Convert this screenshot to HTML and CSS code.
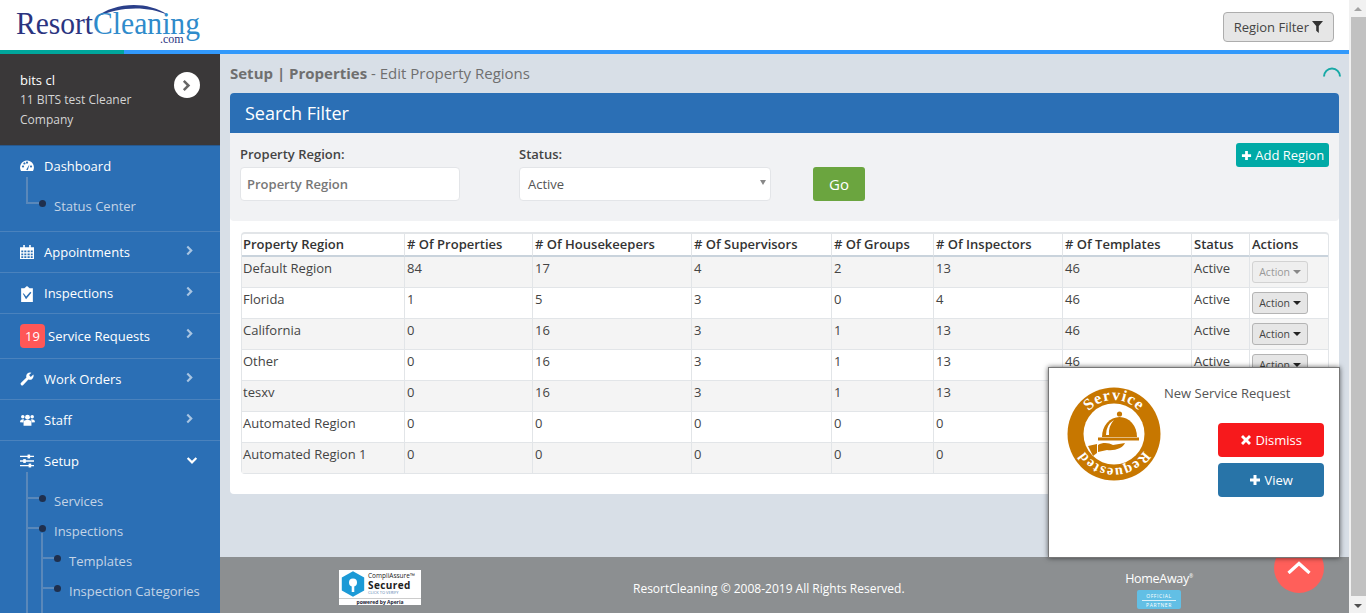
FILE: index.html
```html
<!DOCTYPE html>
<html lang="en">
<head>
    <meta charset="UTF-8">
    <meta name="viewport" content="width=device-width, initial-scale=1.0">
    <title>Edit Property Regions</title>
    <link rel="stylesheet" href="styles.css">
</head>
<body>
    <svg class="icon-defs" width="0" height="0" aria-hidden="true">
        <symbol id="i-right" viewBox="0 0 10 14"><path d="M2.5 1 L8.5 7 L2.5 13 L0.6 11 L4.6 7 L0.6 3 Z"/></symbol>
        <symbol id="i-down" viewBox="0 0 14 10"><path d="M1 3 L2.8 1.2 L7 5.2 L11.2 1.2 L13 3 L7 9 Z"/></symbol>
        <symbol id="i-plus" viewBox="0 0 12 12"><path d="M4.5 1 H7.5 V4.5 H11 V7.5 H7.5 V11 H4.5 V7.5 H1 V4.5 H4.5 Z"/></symbol>
        <symbol id="i-times" viewBox="0 0 12 12"><path d="M3 1 L6 4 L9 1 L11 3 L8 6 L11 9 L9 11 L6 8 L3 11 L1 9 L4 6 L1 3 Z"/></symbol>
    </svg>

    <div class="page">
        <div class="app">
            <header class="topbar">
                <svg class="logo" width="186" height="50" viewBox="0 0 186 50">
                    <path d="M80 17 C98 3 130 0 152 15 C130 5 102 7 80 17 Z" fill="#2a3f8a"/>
                    <text x="0" y="34" class="logo-dark" textLength="77" lengthAdjust="spacingAndGlyphs">Resort</text>
                    <text x="77" y="34" class="logo-light" textLength="107" lengthAdjust="spacingAndGlyphs">Cleaning</text>
                    <text x="144" y="43" class="logo-com">.com</text>
                </svg>
                <button class="region-btn">Region Filter
                    <svg width="11" height="12" viewBox="0 0 11 12"><path d="M0 0 H11 L6.8 5 V12 L4.2 9.8 V5 Z"/></svg>
                </button>
            </header>
            <div class="accent-line"></div>

            <div class="layout">
                <aside class="sidebar">
                    <div class="user-box">
                        <div class="user-text">
                            <div class="user-name">bits cl</div>
                            <div class="user-company">11 BITS test Cleaner Company</div>
                        </div>
                        <span class="user-toggle"><svg width="10" height="13"><use href="#i-right"/></svg></span>
                    </div>

                    <div class="nav-item nav-dash">
                        <div class="nav-row">
                            <svg class="nav-icon" viewBox="0 0 14 12"><path d="M7 0.5 A7 7 0 0 0 1 11 H13 A7 7 0 0 0 7 0.5 Z M3 7.5 a1 1 0 1 1 0.01 0 Z M4.4 4.4 a1 1 0 1 1 0.01 0 Z M7 3.6 a1 1 0 1 1 0.01 0 Z M11 7.5 a1 1 0 1 1 0.01 0 Z M6.3 9.5 L9.5 4.2 L8 9.5 A1 1 0 0 1 6.3 9.5 Z" fill-rule="evenodd"/></svg>
                            <span>Dashboard</span>
                        </div>
                        <ul class="sub-list">
                            <li>Status Center</li>
                        </ul>
                    </div>
                    <div class="nav-item">
                        <div class="nav-row">
                            <svg class="nav-icon" viewBox="0 0 13 13"><path d="M3 0 H4.5 V2 H8.5 V0 H10 V2 H13 V13 H0 V2 H3 Z M1.2 5 V6.8 H3 V5 Z M4 5 V6.8 H5.9 V5 Z M7 5 V6.8 H9 V5 Z M10 5 V6.8 H11.8 V5 Z M1.2 7.8 V9.5 H3 V7.8 Z M4 7.8 V9.5 H5.9 V7.8 Z M7 7.8 V9.5 H9 V7.8 Z M10 7.8 V9.5 H11.8 V7.8 Z M1.2 10.4 V12 H3 V10.4 Z M4 10.4 V12 H5.9 V10.4 Z M7 10.4 V12 H9 V10.4 Z M10 10.4 V12 H11.8 V10.4 Z" fill-rule="evenodd"/></svg>
                            <span>Appointments</span>
                            <svg class="nav-arrow" width="8" height="11"><use href="#i-right"/></svg>
                        </div>
                    </div>
                    <div class="nav-item">
                        <div class="nav-row">
                            <svg class="nav-icon nav-icon-tall" viewBox="0 0 13 15"><path d="M4 2 L6.5 0 L9 2 H12 V15 H1 V2 Z M3 6.8 L2.6 7.2 L5.6 12.4 L10.6 6.4 L9.6 5.4 L5.7 9.8 L3.9 7.4 Z" fill-rule="evenodd"/></svg>
                            <span>Inspections</span>
                            <svg class="nav-arrow" width="8" height="11"><use href="#i-right"/></svg>
                        </div>
                    </div>
                    <div class="nav-item nav-tall">
                        <div class="nav-row">
                            <span class="nav-badge">19</span>
                            <span>Service Requests</span>
                            <svg class="nav-arrow" width="8" height="11"><use href="#i-right"/></svg>
                        </div>
                    </div>
                    <div class="nav-item">
                        <div class="nav-row">
                            <svg class="nav-icon" viewBox="0 0 13 13"><path d="M1 10 L6 5.2 A3.6 3.6 0 0 1 10.6 0.6 L8.4 2.8 L10 4.6 L12.4 2.4 A3.6 3.6 0 0 1 7.8 7 L3 12 A1.4 1.4 0 0 1 1 10 Z"/></svg>
                            <span>Work Orders</span>
                            <svg class="nav-arrow" width="8" height="11"><use href="#i-right"/></svg>
                        </div>
                    </div>
                    <div class="nav-item">
                        <div class="nav-row">
                            <svg class="nav-icon nav-icon-wide" viewBox="0 0 16 12"><circle cx="3" cy="2.5" r="1.9"/><circle cx="13" cy="2.5" r="1.9"/><circle cx="8" cy="3" r="2.6"/><path d="M0 8.5 C0 5.6 2.5 5 4.2 5.4 L3.4 8.6 Z M16 8.5 C16 5.6 13.5 5 11.8 5.4 L12.6 8.6 Z M3.8 12 V8.8 C3.8 6 6 6 8 6 C10 6 12.2 6 12.2 8.8 V12 Z"/></svg>
                            <span>Staff</span>
                            <svg class="nav-arrow" width="8" height="11"><use href="#i-right"/></svg>
                        </div>
                    </div>
                    <div class="nav-item nav-open">
                        <div class="nav-row">
                            <svg class="nav-icon" viewBox="0 0 13 12"><path d="M0 1.2 H13 V2.4 H0 Z M0 5.4 H13 V6.6 H0 Z M0 9.6 H13 V10.8 H0 Z"/><rect x="7" y="0" width="2.4" height="3.6"/><rect x="3" y="4.2" width="2.4" height="3.6"/><rect x="8" y="8.4" width="2.4" height="3.6"/></svg>
                            <span>Setup</span>
                            <svg class="nav-arrow nav-arrow-open" width="12" height="9"><use href="#i-down"/></svg>
                        </div>
                        <ul class="sub-list">
                            <li>Services</li>
                            <li>Inspections
                                <ul class="sub-list sub-nested">
                                    <li>Templates</li>
                                    <li>Inspection Categories</li>
                                </ul>
                            </li>
                        </ul>
                    </div>
                </aside>

                <div class="main">
                    <div class="content">
                        <div class="crumb-row">
                            <div class="crumbs"><b>Setup | Properties</b> - Edit Property Regions</div>
                            <svg class="spinner" width="18" height="10" viewBox="0 0 18 10"><path d="M1 9.5 A8 8 0 0 1 17 9.5" fill="none" stroke="#17a9a6" stroke-width="2"/></svg>
                        </div>

                        <section class="panel">
                            <h2 class="panel-head">Search Filter</h2>
                            <div class="filter">
                                <div class="field field-region">
                                    <label>Property Region:</label>
                                    <input type="text" placeholder="Property Region">
                                </div>
                                <div class="field field-status">
                                    <label>Status:</label>
                                    <div class="fake-select">Active<span class="select-caret"></span></div>
                                </div>
                                <button class="go-btn">Go</button>
                                <button class="add-btn"><svg width="11" height="11"><use href="#i-plus"/></svg> Add Region</button>
                            </div>
                            <div class="table-wrap">
                                <table class="regions">
                                    <colgroup>
                                        <col class="c1"><col class="c2"><col class="c3"><col class="c4"><col class="c5"><col class="c6"><col class="c7"><col class="c8"><col class="c9">
                                    </colgroup>
                                    <thead>
                                        <tr><th>Property Region</th><th># Of Properties</th><th># Of Housekeepers</th><th># Of Supervisors</th><th># Of Groups</th><th># Of Inspectors</th><th># Of Templates</th><th>Status</th><th>Actions</th></tr>
                                    </thead>
                                    <tbody>
                                        <tr><td>Default Region</td><td>84</td><td>17</td><td>4</td><td>2</td><td>13</td><td>46</td><td>Active</td><td><button class="action-btn is-disabled">Action <i class="caret"></i></button></td></tr>
                                        <tr><td>Florida</td><td>1</td><td>5</td><td>3</td><td>0</td><td>4</td><td>46</td><td>Active</td><td><button class="action-btn">Action <i class="caret"></i></button></td></tr>
                                        <tr><td>California</td><td>0</td><td>16</td><td>3</td><td>1</td><td>13</td><td>46</td><td>Active</td><td><button class="action-btn">Action <i class="caret"></i></button></td></tr>
                                        <tr><td>Other</td><td>0</td><td>16</td><td>3</td><td>1</td><td>13</td><td>46</td><td>Active</td><td><button class="action-btn">Action <i class="caret"></i></button></td></tr>
                                        <tr><td>tesxv</td><td>0</td><td>16</td><td>3</td><td>1</td><td>13</td><td>46</td><td>Active</td><td><button class="action-btn">Action <i class="caret"></i></button></td></tr>
                                        <tr><td>Automated Region</td><td>0</td><td>0</td><td>0</td><td>0</td><td>0</td><td>46</td><td>Active</td><td><button class="action-btn">Action <i class="caret"></i></button></td></tr>
                                        <tr><td>Automated Region 1</td><td>0</td><td>0</td><td>0</td><td>0</td><td>0</td><td>46</td><td>Active</td><td><button class="action-btn">Action <i class="caret"></i></button></td></tr>
                                    </tbody>
                                </table>
                            </div>
                        </section>
                    </div>

                    <footer class="footer">
                        <div class="badge-secured">
                            <div class="secured-top">
                                <svg width="30" height="32" viewBox="0 0 30 32"><path d="M15 0 L29 8 V24 L15 32 L1 24 V8 Z" fill="#1c9ad6"/><circle cx="15" cy="14" r="5" fill="#fff"/><rect x="13.4" y="16" width="3.2" height="10" fill="#fff"/></svg>
                                <div class="secured-text">
                                    <span class="secured-a">CompliAssure&#8482;</span>
                                    <span class="secured-b">Secured</span>
                                    <span class="secured-c">CLICK TO VERIFY</span>
                                </div>
                            </div>
                            <div class="secured-foot">powered by Aperia</div>
                        </div>
                        <div class="copyright">ResortCleaning &copy; 2008-2019 All Rights Reserved.</div>
                        <div class="partner">
                            <div class="partner-name">HomeAway<sup>&reg;</sup></div>
                            <div class="partner-tag"><span>OFFICIAL</span><span>PARTNER</span></div>
                        </div>
                    </footer>
                </div>
            </div>
        </div>

        <div class="scrollbar">
            <span class="arrow-up"></span>
            <span class="thumb"></span>
            <span class="arrow-down"></span>
        </div>
    </div>

    <button class="to-top"><svg width="24" height="13" viewBox="0 0 24 13"><path d="M1.5 12 L12 2.5 L22.5 12" fill="none" stroke="#fff" stroke-width="3.2"/></svg></button>

    <div class="toast">
        <svg class="toast-logo" width="94" height="94" viewBox="0 0 94 94">
            <defs>
                <path id="arc-seal" d="M13 47 A34 34 0 0 1 81 47"/>
            </defs>
            <circle cx="47" cy="47" r="46.5" fill="#c77700"/>
            <circle cx="47" cy="47" r="30.5" fill="#fff"/>
            <text class="seal-text"><textPath href="#arc-seal" startOffset="50%" text-anchor="middle">Service</textPath></text>
            <g transform="rotate(180 47 47)">
                <text class="seal-text seal-small"><textPath href="#arc-seal" startOffset="50%" text-anchor="middle">Requested</textPath></text>
            </g>
            <circle cx="52.5" cy="27" r="2.6" fill="#c77700"/>
            <path d="M35 50 A17.5 20 0 0 1 70 50 Z" fill="#c77700"/>
            <path d="M39 48 A14 17 0 0 1 47 33 A19 19 0 0 0 42 48 Z" fill="#fff"/>
            <rect x="31" y="50.5" width="41" height="3" fill="#c77700"/>
            <path d="M31 58 C36 55 42 56 46 58 L58 56 C56 61 48 64 40 63 L31 65 Z" fill="#c77700"/>
            <path d="M21 59 L30 57 L30 66 L26 69 Z" fill="#c77700"/>
        </svg>
        <div class="toast-body">
            <div class="toast-title">New Service Request</div>
            <div class="toast-actions">
                <button class="toast-btn btn-dismiss"><svg width="12" height="12"><use href="#i-times"/></svg> Dismiss</button>
                <button class="toast-btn btn-view"><svg width="12" height="12"><use href="#i-plus"/></svg> View</button>
            </div>
        </div>
    </div>
</body>
</html>
```

FILE: styles.css
```css
* {
    box-sizing: border-box;
}

html, body {
    height: 100%;
    margin: 0;
    overflow: hidden;
}

body {
    font-family: 'Open Sans', sans-serif;
    font-size: 13px;
    color: #3a3a3a;
    background: #d8dfe7;
}

.icon-defs {
    display: block;
    height: 0;
}

.page {
    display: flex;
    height: 613px;
}

.app {
    flex: 1;
    min-width: 0;
    display: flex;
    flex-direction: column;
}

/* top bar */
.topbar {
    height: 50px;
    background: #fff;
    display: flex;
    align-items: center;
    justify-content: space-between;
    padding: 0 15px 0 16px;
    flex-shrink: 0;
}

.logo {
    display: block;
}

.logo-dark {
    font-family: 'Liberation Serif', serif;
    font-size: 32px;
    fill: #2a3480;
}

.logo-light {
    font-family: 'Liberation Serif', serif;
    font-size: 32px;
    fill: #2f8bcb;
}

.logo-com {
    font-family: 'Liberation Serif', serif;
    font-size: 12px;
    fill: #2a3480;
}

.region-btn {
    height: 30px;
    width: 111px;
    padding: 0;
    font: 13px 'Open Sans', sans-serif;
    color: #444;
    background: #e6e6e6;
    border: 1px solid #adadad;
    border-radius: 4px;
    margin-top: 4px;
}

.region-btn svg {
    fill: #333;
    vertical-align: -1px;
}

.accent-line {
    height: 4px;
    flex-shrink: 0;
    background: linear-gradient(to right, #00a69c 124px, #3299fb 124px);
}

.layout {
    flex: 1;
    min-height: 0;
    display: flex;
}

/* sidebar */
.sidebar {
    width: 220px;
    flex-shrink: 0;
    background: #2b6fb5;
    overflow: hidden;
}

.user-box {
    height: 92px;
    background: #3a3839;
    color: #d5d5d5;
    padding: 16px 20px 0;
    display: flex;
    justify-content: space-between;
    align-items: flex-start;
    border-bottom: 1px solid #27598f;
}

.user-text {
    width: 130px;
    font-size: 12px;
    line-height: 20px;
}

.user-name {
    font-size: 13px;
    color: #fff;
}

.user-toggle {
    width: 26px;
    height: 26px;
    margin-top: 2px;
    border-radius: 50%;
    background: #fff;
    display: flex;
    align-items: center;
    justify-content: center;
}

.user-toggle svg {
    fill: #666;
}

.nav-item {
    border-bottom: 1px solid #4a82bd;
    min-height: 41px;
    color: #fff;
}

.nav-dash {
    height: 86px;
}

.nav-tall {
    height: 45px;
}

.nav-row {
    height: 40px;
    display: flex;
    align-items: center;
    padding-left: 20px;
    position: relative;
}

.nav-tall .nav-row {
    height: 44px;
}

.nav-icon {
    width: 14px;
    height: 14px;
    fill: #fff;
    margin-right: 10px;
    flex-shrink: 0;
}

.nav-icon-wide {
    width: 15px;
    margin-right: 9px;
}

.nav-icon-tall {
    height: 16px;
    margin-top: 2px;
}

.nav-badge {
    width: 25px;
    height: 24px;
    margin-right: 3px;
    border-radius: 4px;
    background: #ff5757;
    font-size: 13px;
    display: flex;
    align-items: center;
    justify-content: center;
}

.nav-arrow {
    position: absolute;
    right: 26px;
    top: 13px;
    fill: #a9c5e2;
}

.nav-tall .nav-arrow {
    top: 14px;
}

.nav-arrow-open {
    right: 22px;
    top: 15px;
    fill: #fff;
}

/* tree lists in the sidebar */
.sub-list {
    list-style: none;
    margin: 0;
    padding: 0 0 0 27px;
    color: #c4d4e6;
    position: relative;
}

.sub-list::before {
    content: "";
    position: absolute;
    left: 26px;
    top: -14px;
    bottom: 13px;
    width: 2px;
    background: #5a88ba;
}

.sub-list li {
    position: relative;
    padding-left: 27px;
    line-height: 30px;
}

.sub-list li::before {
    content: "";
    position: absolute;
    left: 0;
    top: 11px;
    width: 12px;
    height: 2px;
    background: #5a88ba;
}

.sub-list li::after {
    content: "";
    position: absolute;
    left: 12px;
    top: 9px;
    width: 7px;
    height: 7px;
    border-radius: 50%;
    background: #1f2f4d;
}

.nav-dash .sub-list {
    margin-top: 5px;
}

.nav-dash .sub-list::before {
    bottom: 17px;
}

.nav-open {
    border-bottom: 0;
}

.nav-open > .sub-list {
    margin-top: 5px;
}

.nav-open > .sub-list::before {
    bottom: -60px;
}

.sub-nested {
    padding-left: 15px;
    margin-left: -27px;
}

.sub-list.sub-nested::before {
    left: 14px;
    top: -13px;
    bottom: -30px;
}

/* main column */
.main {
    flex: 1;
    min-width: 0;
    display: flex;
    flex-direction: column;
}

.content {
    flex: 1;
    min-height: 0;
    padding: 0 10px;
}

.crumb-row {
    height: 39px;
    padding-bottom: 2px;
    display: flex;
    align-items: center;
    justify-content: space-between;
}

.crumbs {
    font-size: 15px;
    color: #6f6f6f;
}

.crumbs b {
    font-weight: 700;
}

.spinner {
    margin-top: -2px;
    margin-right: -2px;
}

.panel {
    background: #fff;
    border-radius: 4px;
    height: 401px;
}

.panel-head {
    margin: 0;
    height: 40px;
    line-height: 40px;
    padding-left: 15px;
    font-size: 18px;
    font-weight: 400;
    color: #fff;
    background: #2b6fb5;
    border-radius: 4px 4px 0 0;
}

.filter {
    height: 88px;
    background: #f1f2f4;
    padding: 12px 10px 0;
    display: flex;
    align-items: flex-start;
    border-radius: 0 0 4px 4px;
}

.field label {
    display: block;
    font-weight: 600;
    color: #444;
    line-height: 18px;
    margin-bottom: 4px;
}

.field input,
.fake-select {
    height: 34px;
    border: 1px solid #e3e5e8;
    border-radius: 4px;
    background: #fff;
    font: 13px 'Open Sans', sans-serif;
    padding: 0 6px;
    display: block;
}

.field input {
    width: 220px;
}

.field input::placeholder {
    color: #777;
    font-weight: 600;
    opacity: 1;
}

.field-region {
    margin-right: 59px;
}

.fake-select {
    width: 252px;
    padding: 0 8px;
    line-height: 32px;
    color: #555;
    position: relative;
}

.select-caret {
    position: absolute;
    right: 4px;
    top: 12px;
    border-left: 3.5px solid transparent;
    border-right: 3.5px solid transparent;
    border-top: 5px solid #888;
}

.go-btn {
    width: 52px;
    height: 34px;
    margin: 22px 0 0 42px;
    border: 0;
    border-radius: 3px;
    background: #6ba53f;
    color: #fff;
    font: 15px 'Open Sans', sans-serif;
}

.add-btn {
    margin: -2px 0 0 auto;
    width: 93px;
    height: 24px;
    padding: 0;
    border: 0;
    border-radius: 3px;
    background: #00aaa6;
    color: #fff;
    font: 13px 'Open Sans', sans-serif;
    white-space: nowrap;
}

.add-btn svg {
    fill: #fff;
    vertical-align: -1px;
}

.table-wrap {
    padding: 11px 10px 0 11px;
}

.regions {
    width: 1088px;
    table-layout: fixed;
    border-collapse: separate;
    border-spacing: 0;
    border-top: 2px solid #e2e5e8;
    border-left: 1px solid #e2e5e8;
    border-right: 1px solid #e2e5e8;
    border-bottom: 1px solid #e2e5e8;
    border-radius: 4px;
}

.c1 { width: 163px; }
.c2 { width: 128px; }
.c3 { width: 159px; }
.c4 { width: 140px; }
.c5 { width: 102px; }
.c6 { width: 129px; }
.c7 { width: 129px; }
.c8 { width: 58px; }
.c9 { width: 78px; }

.regions th,
.regions td {
    padding: 0 2px;
    border-right: 1px solid #e2e5e8;
    text-align: left;
    white-space: nowrap;
    overflow: hidden;
}

.regions th:first-child,
.regions td:first-child {
    padding-left: 1px;
}

.regions th:last-child,
.regions td:last-child {
    border-right: 0;
}

.regions th {
    height: 23px;
    padding-bottom: 1px;
    font-weight: 600;
    color: #333;
    border-bottom: 2px solid #c9d3dc;
}

.regions td {
    height: 31px;
    color: #444;
    vertical-align: top;
    padding-top: 2px;
    border-bottom: 1px solid #e2e5e8;
}

.regions tr:last-child td {
    border-bottom: 0;
    height: 30px;
}

.regions tbody tr:nth-child(odd) td {
    background: #f4f4f4;
}

.regions td:last-child {
    padding: 4px 0 0 2px;
}

.action-btn {
    display: block;
    width: 56px;
    height: 22px;
    padding: 0;
    border: 1px solid #b4b4b4;
    border-radius: 3px;
    background: #e6e6e6;
    color: #444;
    font: 10.5px 'Open Sans', sans-serif;
}

.action-btn.is-disabled {
    color: #999;
    border-color: #d2d2d2;
    background: #eeeeee;
}

.caret {
    display: inline-block;
    vertical-align: 2px;
    border-left: 4px solid transparent;
    border-right: 4px solid transparent;
    border-top: 4px solid #222;
}

.is-disabled .caret {
    border-top-color: #888;
}

/* footer */
.footer {
    height: 56px;
    flex-shrink: 0;
    background: #8c8f91;
    color: #fff;
    display: flex;
    align-items: center;
    padding-left: 119px;
}

.badge-secured {
    width: 82px;
    height: 35px;
    background: #fff;
    flex-shrink: 0;
    margin-top: 5px;
}

.secured-top {
    display: flex;
    align-items: flex-start;
    height: 28px;
    padding: 1px 0 0 2px;
    gap: 3px;
}

.secured-top svg {
    width: 24px;
    height: 26px;
}

.secured-text {
    display: flex;
    flex-direction: column;
    color: #222;
    line-height: 1;
    padding-top: 2px;
}

.secured-a {
    font-size: 6.5px;
}

.secured-b {
    font-size: 10px;
    font-weight: 700;
    letter-spacing: 0.4px;
}

.secured-c {
    font-size: 4px;
    color: #5a7fb0;
    margin-top: 1px;
}

.secured-foot {
    border-top: 1px solid #ccc;
    font-size: 5px;
    line-height: 6px;
    font-weight: 700;
    color: #223;
    text-align: center;
}

.copyright {
    margin-left: 212px;
    width: 273px;
    white-space: nowrap;
    padding-top: 6px;
    font-size: 12px;
}

.partner {
    margin-left: 219px;
    width: 68px;
    text-align: center;
    padding-top: 6px;
}

.partner-name {
    font-size: 12.5px;
    line-height: 18px;
    letter-spacing: -0.3px;
}

.partner-name sup {
    font-size: 5px;
}

.partner-tag {
    width: 44px;
    height: 19px;
    margin: 2px auto 0;
    background: #62bfe5;
    border-radius: 2px;
    font-size: 5px;
    line-height: 8px;
    letter-spacing: 0.6px;
    display: flex;
    flex-direction: column;
    align-items: center;
    padding-top: 2px;
}

.partner-tag span:first-child {
    border-bottom: 1px solid #d9f0fa;
    width: 34px;
    text-align: center;
}

/* fake scrollbar, the window shows a classic one */
.scrollbar {
    width: 17px;
    flex-shrink: 0;
    background: #f1f1f1;
    display: flex;
    flex-direction: column;
    align-items: center;
}

.thumb {
    flex: 1;
    width: 15px;
    margin-left: 1px;
    background: #c1c1c1;
}

.arrow-up,
.arrow-down {
    flex-shrink: 0;
    width: 0;
    border-left: 4px solid transparent;
    border-right: 4px solid transparent;
}

.arrow-up {
    height: 0;
    margin: 7px 0 6px;
    border-bottom: 4px solid #a3a3a3;
}

.arrow-down {
    height: 0;
    margin: 8px 0 5px;
    border-top: 4px solid #505050;
}

/* floating bits */
.to-top {
    position: absolute;
    left: 1274px;
    top: 543px;
    width: 50px;
    height: 50px;
    padding: 18px 0 0;
    border: 0;
    border-radius: 50%;
    background: #ff5f5a;
    display: flex;
    justify-content: center;
    align-items: flex-start;
}

.toast {
    position: absolute;
    left: 1048px;
    top: 367px;
    width: 292px;
    height: 191px;
    background: #fff;
    border: 1px solid #777;
    box-shadow: 0 0 5px rgba(0, 0, 0, 0.6);
    display: flex;
    padding: 19px 15px 0 18px;
}

.toast-logo {
    flex-shrink: 0;
}

.toast-logo .seal-text {
    font-family: 'Liberation Serif', serif;
    font-weight: 700;
    font-size: 16px;
    letter-spacing: 1px;
    fill: #fff;
}

.toast-logo .seal-small {
    font-size: 14.5px;
    letter-spacing: 0.8px;
}

.toast-body {
    flex: 1;
    padding-left: 3px;
}

.toast-title {
    font-size: 13px;
    line-height: 16px;
    margin-top: -2px;
    color: #555;
}

.toast-actions {
    display: flex;
    flex-direction: column;
    align-items: flex-end;
    gap: 6px;
    margin-top: 22px;
}

.toast-btn {
    width: 106px;
    height: 34px;
    padding: 0;
    border: 0;
    border-radius: 4px;
    color: #fff;
    font: 13px 'Open Sans', sans-serif;
}

.toast-btn svg {
    fill: #fff;
    vertical-align: -1px;
}

.btn-dismiss {
    background: #f7191c;
}

.btn-view {
    background: #2874a8;
}
```
